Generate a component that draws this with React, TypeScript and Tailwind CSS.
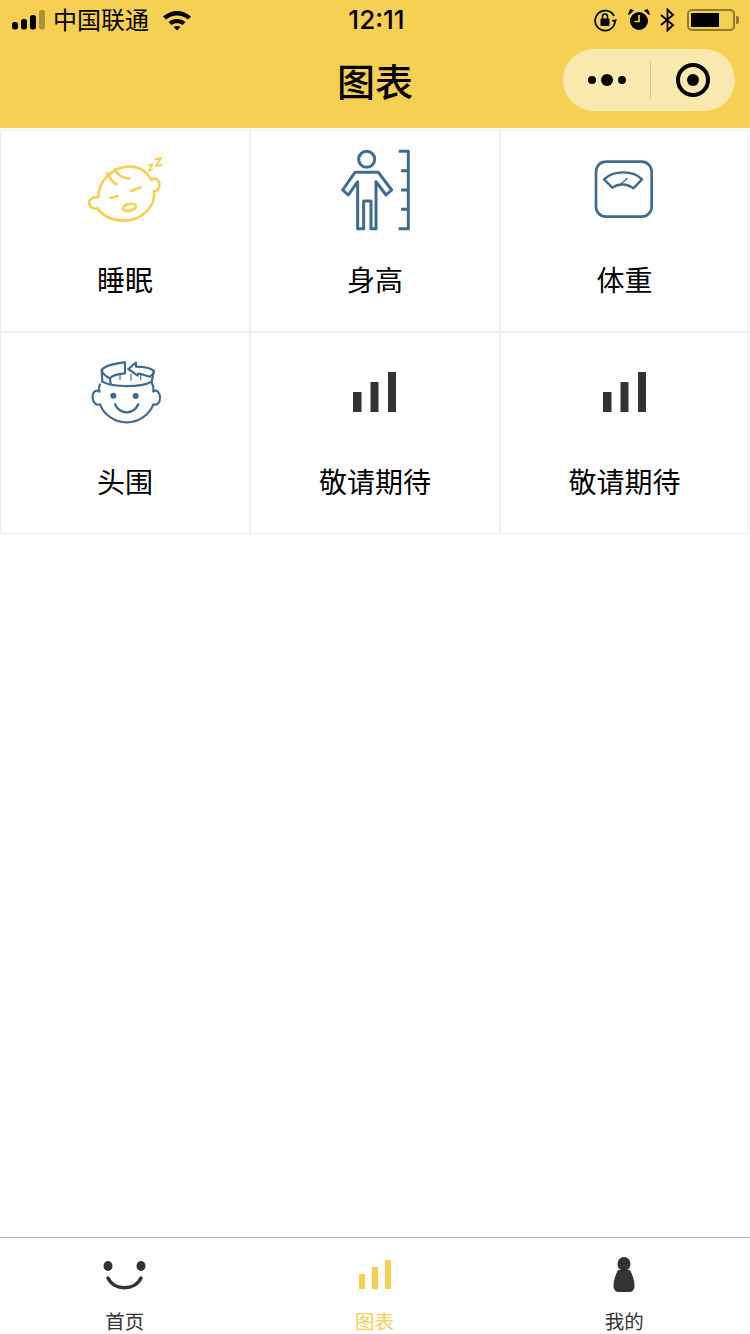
const F = { fontFamily: '"Noto Sans CJK SC", "Liberation Sans", sans-serif' };

function Box({ dy = 0, children }: { dy?: number; children: React.ReactNode }) {
  return (
    <svg width="110" height="100" viewBox="0 0 330 300" fill="none" strokeLinejoin="round">
      <g transform={`translate(0 ${dy})`}>{children}</g>
    </svg>
  );
}

function Sleep() {
  return (
    <Box>
      <g stroke="#f5d052" strokeWidth="8" strokeLinecap="round">
        <path d="M85 172 C85 125 125 80 180 80 C210 80 232 98 244 120 C256 110 270 122 268 138 C266 150 258 154 252 153 C258 200 215 242 160 242 C125 242 95 225 82 205 C68 210 56 198 58 186 C60 175 72 170 85 172 Z" />
        <path d="M112 100 C120 116 128 128 140 133" />
        <path d="M134 88 C142 104 160 116 178 116" />
        <path d="M122 174 L143 168" />
        <path d="M183 153 L212 142" />
        <ellipse cx="178" cy="202" rx="20" ry="10" transform="rotate(-12 178 202)" />
        <path d="M236 76 L248 72 L236 92 L248 88" strokeWidth="5" />
        <path d="M256 58 L273 54 L258 78 L274 74" strokeWidth="6" />
      </g>
    </Box>
  );
}

function Height() {
  return (
    <Box>
      <g stroke="#3f6b8f" strokeWidth="9">
        <circle cx="140" cy="58" r="24" />
        <path d="M105 97 L175 97 L215 150 L198 165 L168 125 L168 266 L153 266 L153 183 L131 183 L131 266 L113 266 L113 125 L85 165 L68 150 Z" />
        <path d="M236 34 L265 34 L265 266 L236 266" />
        <path d="M243 92 L265 92 M243 150 L265 150 M243 208 L265 208" />
      </g>
    </Box>
  );
}

function Scale() {
  return (
    <Box>
      <g stroke="#3f6b8f" strokeLinecap="round">
        <rect x="78" y="65" width="167" height="165" rx="30" strokeWidth="8" />
        <path d="M102 118 C130 90 190 90 216 118 L190 145 C170 130 145 130 127 143 Z" strokeWidth="7" />
        <path d="M152 133 L172 115" strokeWidth="4" />
      </g>
    </Box>
  );
}

function Head() {
  return (
    <Box dy={9}>
      <g stroke="#3f6b8f" strokeWidth="6.500" strokeLinecap="round">
        <path d="M90 118 C85 125 88 135 88 140 C76 130 66 145 68 160 C70 175 80 182 90 178 C102 210 135 232 170 232 C205 232 238 210 250 178 C260 182 270 175 270 158 C270 143 260 132 250 140 C250 132 252 125 246 115" />
        <path d="M97 110 C130 128 210 128 245 110" />
        <path d="M95 75 L97 110 M252 78 L245 110" />
        <path d="M95 75 C105 62 135 55 165 52 L165 85 C145 87 125 90 120 100 C108 95 98 87 95 75" />
        <path d="M120 100 L122 118" />
        <path d="M175 72 L198 53 L198 65 C220 65 240 68 252 78 C250 85 248 90 240 95 C228 92 215 87 205 86 L203 92 Z" />
        <path d="M150 90 L150 104 M183 88 L183 106 M212 90 L212 104" strokeWidth="3.500" />
        <circle cx="130" cy="152" r="9" fill="#3f6b8f" stroke="none" />
        <circle cx="197" cy="153" r="9" fill="#3f6b8f" stroke="none" />
        <path d="M135 178 C150 210 190 210 205 178" strokeWidth="7" />
      </g>
    </Box>
  );
}

function Bars() {
  return (
    <svg width="44" height="40" viewBox="0 0 44 40" fill="#333333">
      <rect x="0" y="20" width="8.500" height="20" />
      <rect x="17.500" y="10" width="8" height="30" />
      <rect x="35" y="0" width="8" height="40" />
    </svg>
  );
}

function Cell({ label, icon }: { label: string; icon: React.ReactNode }) {
  return (
    <div className="flex h-[202px] flex-col items-center border border-[#eeeeee]">
      <div className="flex h-[118px] w-full items-center justify-center">{icon}</div>
      <div className="mt-[10px] text-[28px] leading-[40px] text-black" style={F}>{label}</div>
    </div>
  );
}

function Tab({ label, active, icon }: { label: string; active?: boolean; icon: React.ReactNode }) {
  return (
    <div className="flex flex-1 flex-col items-center">
      <div className="flex h-[50px] items-center justify-center">{icon}</div>
      <div className={`mt-[10px] text-[19.5px] leading-[26px] ${active ? "text-[#f5d052]" : "text-[#333333]"}`} style={F}>{label}</div>
    </div>
  );
}

export default function App() {
  return (
    <div className="flex h-[1334px] w-[750px] flex-col overflow-hidden bg-white">
      <header className="flex h-[128px] shrink-0 flex-col bg-[#f5d052] text-black">
        <div className="flex h-[40px] items-center justify-between pl-[12px] pr-[11px]">
          <div className="flex w-[300px] items-center">
            <svg width="34" height="20" viewBox="0 0 34 20">
              <rect x="0" y="12" width="6" height="7.500" rx="2.500" />
              <rect x="9" y="9" width="6" height="10.500" rx="2.500" />
              <rect x="18" y="5" width="6" height="14.500" rx="2.500" />
              <rect x="27" y="0" width="6" height="19.500" rx="2.500" fill="#000" opacity="0.3" />
            </svg>
            <span className="ml-[7px] text-[24px] leading-[30px] -translate-y-px" style={F}>中国联通</span>
            <svg className="ml-[13px]" width="30" height="22" viewBox="0 0 30 22">
              <path d="M1 7.500 C9 0 21 0 29 7.500 L26 10.500 C19.500 5 10.500 5 4 10.500 Z" />
              <path d="M6.500 13 C11 9 19 9 23.500 13 L20.500 16 C17.500 13.500 12.500 13.500 9.500 16 Z" />
              <path d="M11.500 18 C13.500 16.500 16.500 16.500 18.500 18 L15 21.500 Z" />
            </svg>
          </div>
          <span className="pl-[2px] text-[26px] font-medium leading-[30px]" style={{ fontFamily: "Inter, sans-serif" }}>12:11</span>
          <div className="flex w-[300px] items-center justify-end">
            <svg width="24" height="24" viewBox="0 0 24 24" fill="none" stroke="#000" strokeWidth="1.700">
              <path d="M21 8 A10 10 0 1 0 22 14" />
              <path d="M18.500 12 L22 15.500 L24 11.500 Z" fill="#000" stroke="none" />
              <rect x="7.500" y="10.500" width="9" height="7.500" rx="1" fill="#000" stroke="none" />
              <path d="M9.500 11 L9.500 8.500 A2.500 2.500 0 0 1 14.500 8.500 L14.500 11" strokeWidth="1.500" />
            </svg>
            <svg className="ml-[11px]" width="22" height="22" viewBox="0 0 22 22">
              <circle cx="11" cy="12" r="9" />
              <path d="M11 6 L11 12.500 L6.500 12.500" fill="none" stroke="#f5d052" strokeWidth="1.700" />
              <path d="M0.500 5.500 L5 1.500 L2.500 0.800 Z M21.500 5.500 L17 1.500 L19.500 0.800 Z" stroke="#000" strokeWidth="1.200" />
            </svg>
            <svg className="ml-[10px]" width="15" height="24" viewBox="0 0 15 24" fill="none" stroke="#000" strokeWidth="1.800">
              <path d="M1 7 L13 17 L7.500 22.500 L7.500 1.500 L13 7 L1 17" />
            </svg>
            <div className="ml-[12px] flex h-[22px] w-[48px] items-center rounded-[5px] border-2 border-[#8f7a30] p-[2px]">
              <div className="h-full w-[28px] rounded-[1px] bg-black" />
            </div>
            <div className="ml-[1px] h-[8px] w-[3px] rounded-r-[2px] bg-[#8f7a30]" />
          </div>
        </div>
        <div className="relative flex h-[88px] items-center justify-center pb-[8px]">
          <h1 className="text-[38px] font-medium leading-[50px]" style={F}>图表</h1>
          <div className="absolute right-[15px] top-[9px] flex h-[62px] w-[172px] items-center rounded-full bg-[#f9e9ae]">
            <div className="flex h-[36px] flex-1 items-center justify-center gap-[5px] border-r border-[#d9c787] pl-[2px]">
              <span className="h-[8px] w-[8px] rounded-full bg-black" />
              <span className="h-[12px] w-[12px] rounded-full bg-black" />
              <span className="h-[8px] w-[8px] rounded-full bg-black" />
            </div>
            <div className="flex flex-1 items-center justify-center">
              <div className="flex h-[34px] w-[34px] items-center justify-center rounded-full border-[4px] border-black">
                <span className="h-[12px] w-[12px] rounded-full bg-black" />
              </div>
            </div>
          </div>
        </div>
      </header>

      <main className="grid flex-1 grid-cols-[250px_250px_249px] content-start pt-[2px]">
        <Cell label="睡眠" icon={<Sleep />} />
        <Cell label="身高" icon={<Height />} />
        <Cell label="体重" icon={<Scale />} />
        <Cell label="头围" icon={<Head />} />
        <Cell label="敬请期待" icon={<Bars />} />
        <Cell label="敬请期待" icon={<Bars />} />
      </main>

      <footer className="flex h-[97px] shrink-0 border-t border-[#b3b3b3] pr-[1px] pt-[13px]">
        <Tab
          label="首页"
          icon={
            <svg width="44" height="30" viewBox="0 0 44 30" fill="none">
              <ellipse cx="5" cy="6" rx="4.500" ry="5" fill="#333" />
              <ellipse cx="38" cy="6" rx="4.500" ry="5" fill="#333" />
              <path d="M5 18 C11 31 32 31 38 18" stroke="#333" strokeWidth="3.500" strokeLinecap="round" />
            </svg>
          }
        />
        <Tab
          label="图表"
          active
          icon={
            <svg width="32" height="29" viewBox="0 0 32 29" fill="#f5d052">
              <rect x="0" y="14" width="6" height="15" />
              <rect x="13" y="7" width="6" height="22" />
              <rect x="26" y="0" width="6" height="29" />
            </svg>
          }
        />
        <Tab
          label="我的"
          icon={
            <svg width="22" height="35" viewBox="0 0 22 35" fill="#333">
              <ellipse cx="11" cy="7" rx="6.500" ry="7" />
              <path d="M5 13 L17 13 C19.500 18 21.500 23 21.500 29 C21.500 33 19 35 16 35 L6 35 C3 35 0.500 33 0.500 29 C0.500 23 2.500 18 5 13 Z" />
            </svg>
          }
        />
      </footer>
    </div>
  );
}
